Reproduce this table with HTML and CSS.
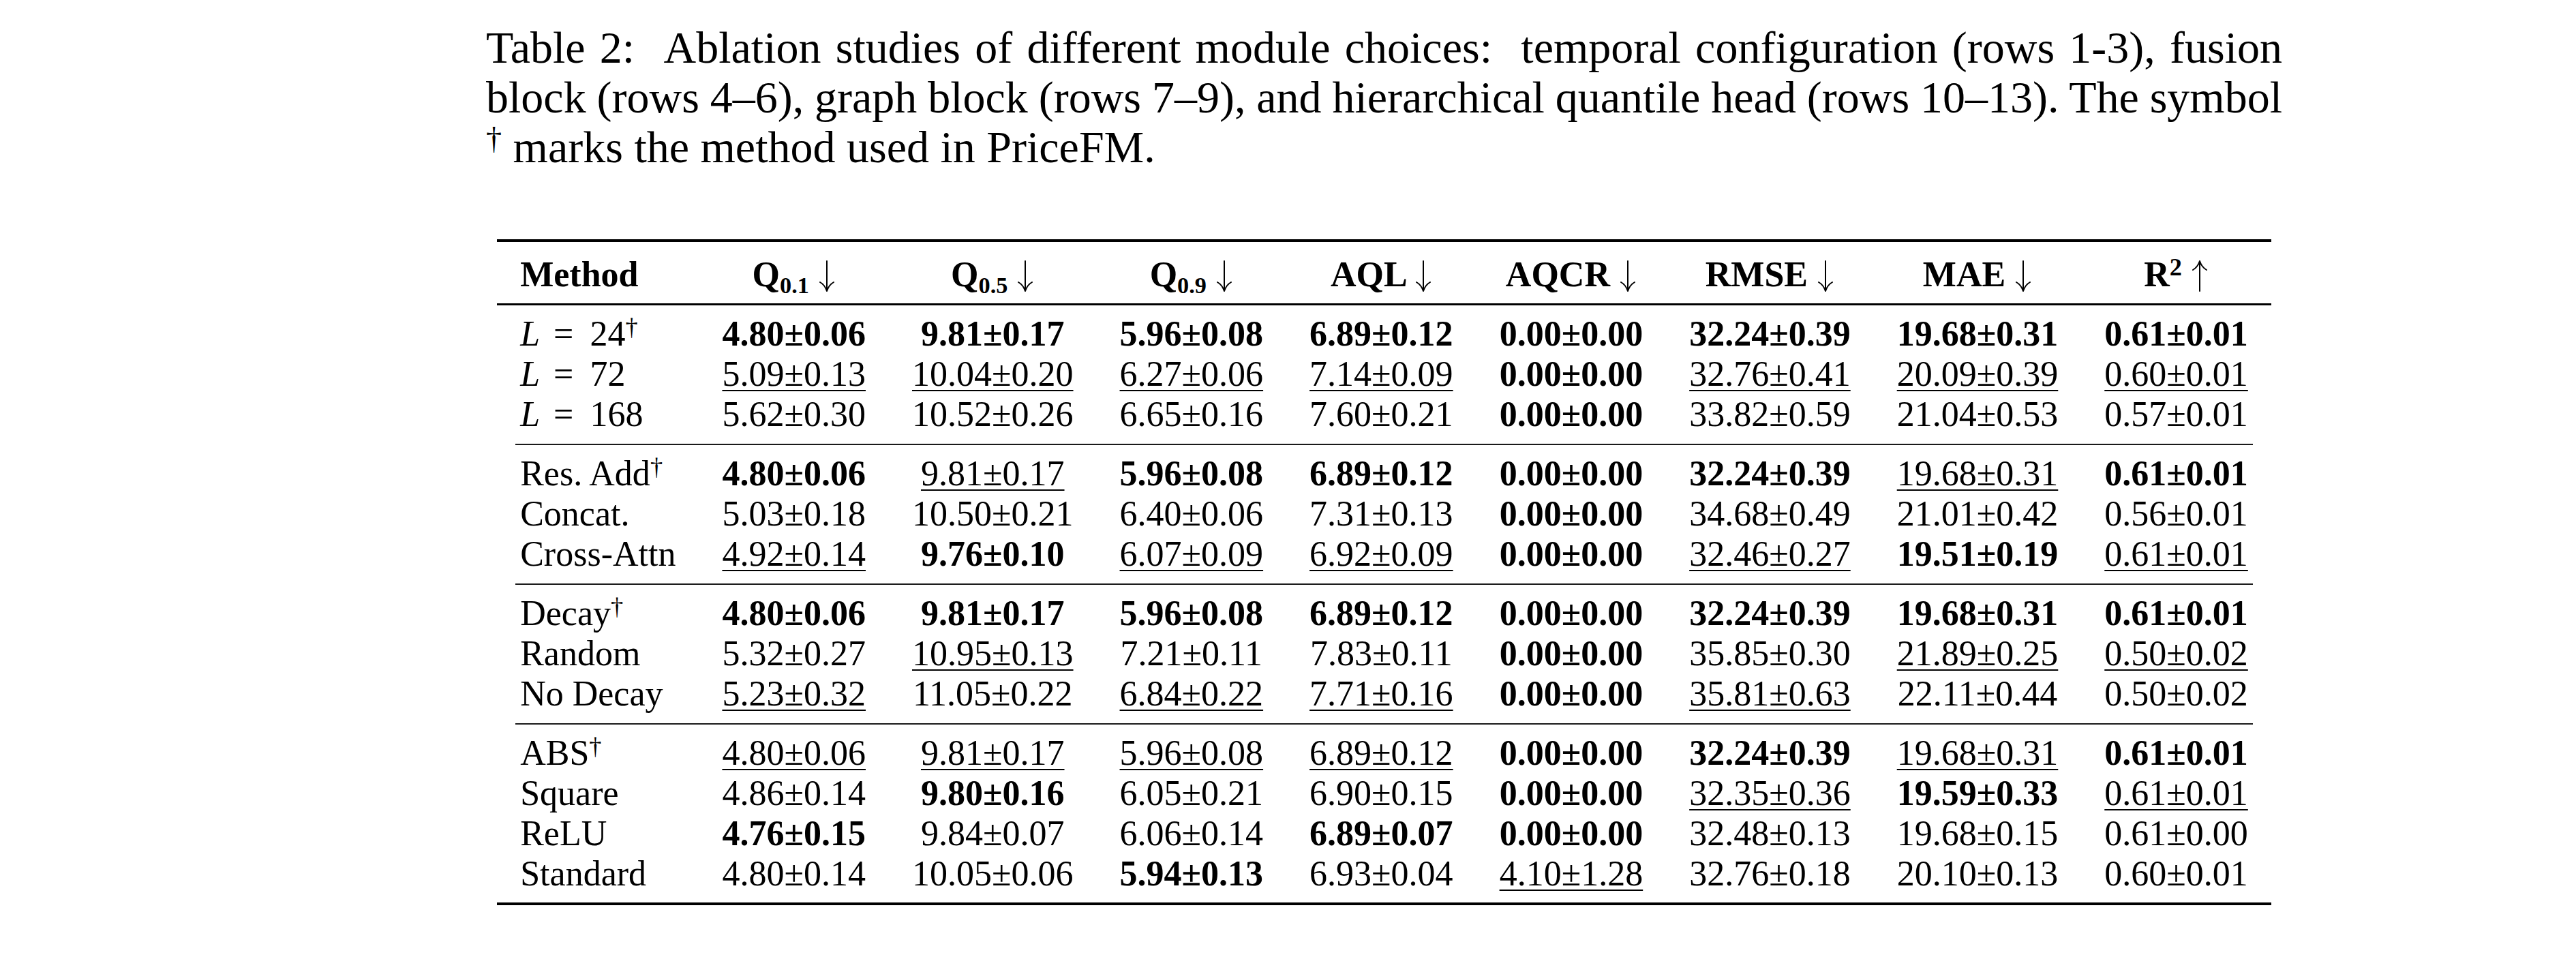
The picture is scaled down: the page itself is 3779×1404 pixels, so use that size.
FILE: index.html
```html
<!DOCTYPE html>
<html lang="en">
<head>
<meta charset="utf-8">
<title>Table 2: Ablation studies</title>
<link rel="stylesheet" href="styles.css">
</head>
<body>
<figure class="page">
  <figcaption class="caption">
    <span class="line">Table 2: &nbsp;Ablation studies of different module choices: &nbsp;temporal configuration (rows 1-3), fusion</span>
    <span class="line tight">block (rows 4–6), graph block (rows 7–9), and hierarchical quantile head (rows 10–13). The symbol</span>
    <span class="line last"><span class="dag">†</span> marks the method used in PriceFM.</span>
  </figcaption>
  <table class="results">
    <thead>
      <tr>
        <th class="method">Method</th>
        <th>Q<span class="sub">0.1</span> <svg class="arrow" viewBox="0 0 26 46" width="26" height="46" aria-label="↓"><path d="M13 1 V44 M3 32 Q10 36 13 45 Q16 36 23 32"/></svg></th>
        <th>Q<span class="sub">0.5</span> <svg class="arrow" viewBox="0 0 26 46" width="26" height="46" aria-label="↓"><path d="M13 1 V44 M3 32 Q10 36 13 45 Q16 36 23 32"/></svg></th>
        <th>Q<span class="sub">0.9</span> <svg class="arrow" viewBox="0 0 26 46" width="26" height="46" aria-label="↓"><path d="M13 1 V44 M3 32 Q10 36 13 45 Q16 36 23 32"/></svg></th>
        <th>AQL <svg class="arrow" viewBox="0 0 26 46" width="26" height="46" aria-label="↓"><path d="M13 1 V44 M3 32 Q10 36 13 45 Q16 36 23 32"/></svg></th>
        <th>AQCR <svg class="arrow" viewBox="0 0 26 46" width="26" height="46" aria-label="↓"><path d="M13 1 V44 M3 32 Q10 36 13 45 Q16 36 23 32"/></svg></th>
        <th>RMSE <svg class="arrow" viewBox="0 0 26 46" width="26" height="46" aria-label="↓"><path d="M13 1 V44 M3 32 Q10 36 13 45 Q16 36 23 32"/></svg></th>
        <th>MAE <svg class="arrow" viewBox="0 0 26 46" width="26" height="46" aria-label="↓"><path d="M13 1 V44 M3 32 Q10 36 13 45 Q16 36 23 32"/></svg></th>
        <th>R<span class="sup">2</span> <svg class="arrow" viewBox="0 0 26 46" width="26" height="46" aria-label="↑"><path d="M13 45 V2 M3 14 Q10 10 13 1 Q16 10 23 14"/></svg></th>
      </tr>
    </thead>
    <tbody class="grp">
      <tr>
        <td class="method"><i class="var">L</i><span class="eq">=</span>24<span class="dag">†</span></td>
        <td><strong>4.80±0.06</strong></td><td><strong>9.81±0.17</strong></td><td><strong>5.96±0.08</strong></td><td><strong>6.89±0.12</strong></td><td><strong>0.00±0.00</strong></td><td><strong>32.24±0.39</strong></td><td><strong>19.68±0.31</strong></td><td><strong>0.61±0.01</strong></td>
      </tr>
      <tr>
        <td class="method"><i class="var">L</i><span class="eq">=</span>72</td>
        <td><span class="second">5.09±0.13</span></td><td><span class="second">10.04±0.20</span></td><td><span class="second">6.27±0.06</span></td><td><span class="second">7.14±0.09</span></td><td><strong>0.00±0.00</strong></td><td><span class="second">32.76±0.41</span></td><td><span class="second">20.09±0.39</span></td><td><span class="second">0.60±0.01</span></td>
      </tr>
      <tr>
        <td class="method"><i class="var">L</i><span class="eq">=</span>168</td>
        <td>5.62±0.30</td><td>10.52±0.26</td><td>6.65±0.16</td><td>7.60±0.21</td><td><strong>0.00±0.00</strong></td><td>33.82±0.59</td><td>21.04±0.53</td><td>0.57±0.01</td>
      </tr>
    </tbody>
    <tbody class="grp">
      <tr>
        <td class="method">Res. Add<span class="dag">†</span></td>
        <td><strong>4.80±0.06</strong></td><td><span class="second">9.81±0.17</span></td><td><strong>5.96±0.08</strong></td><td><strong>6.89±0.12</strong></td><td><strong>0.00±0.00</strong></td><td><strong>32.24±0.39</strong></td><td><span class="second">19.68±0.31</span></td><td><strong>0.61±0.01</strong></td>
      </tr>
      <tr>
        <td class="method">Concat.</td>
        <td>5.03±0.18</td><td>10.50±0.21</td><td>6.40±0.06</td><td>7.31±0.13</td><td><strong>0.00±0.00</strong></td><td>34.68±0.49</td><td>21.01±0.42</td><td>0.56±0.01</td>
      </tr>
      <tr>
        <td class="method">Cross-Attn</td>
        <td><span class="second">4.92±0.14</span></td><td><strong>9.76±0.10</strong></td><td><span class="second">6.07±0.09</span></td><td><span class="second">6.92±0.09</span></td><td><strong>0.00±0.00</strong></td><td><span class="second">32.46±0.27</span></td><td><strong>19.51±0.19</strong></td><td><span class="second">0.61±0.01</span></td>
      </tr>
    </tbody>
    <tbody class="grp">
      <tr>
        <td class="method">Decay<span class="dag">†</span></td>
        <td><strong>4.80±0.06</strong></td><td><strong>9.81±0.17</strong></td><td><strong>5.96±0.08</strong></td><td><strong>6.89±0.12</strong></td><td><strong>0.00±0.00</strong></td><td><strong>32.24±0.39</strong></td><td><strong>19.68±0.31</strong></td><td><strong>0.61±0.01</strong></td>
      </tr>
      <tr>
        <td class="method">Random</td>
        <td>5.32±0.27</td><td><span class="second">10.95±0.13</span></td><td>7.21±0.11</td><td>7.83±0.11</td><td><strong>0.00±0.00</strong></td><td>35.85±0.30</td><td><span class="second">21.89±0.25</span></td><td><span class="second">0.50±0.02</span></td>
      </tr>
      <tr>
        <td class="method">No Decay</td>
        <td><span class="second">5.23±0.32</span></td><td>11.05±0.22</td><td><span class="second">6.84±0.22</span></td><td><span class="second">7.71±0.16</span></td><td><strong>0.00±0.00</strong></td><td><span class="second">35.81±0.63</span></td><td>22.11±0.44</td><td>0.50±0.02</td>
      </tr>
    </tbody>
    <tbody class="grp">
      <tr>
        <td class="method">ABS<span class="dag">†</span></td>
        <td><span class="second">4.80±0.06</span></td><td><span class="second">9.81±0.17</span></td><td><span class="second">5.96±0.08</span></td><td><span class="second">6.89±0.12</span></td><td><strong>0.00±0.00</strong></td><td><strong>32.24±0.39</strong></td><td><span class="second">19.68±0.31</span></td><td><strong>0.61±0.01</strong></td>
      </tr>
      <tr>
        <td class="method">Square</td>
        <td>4.86±0.14</td><td><strong>9.80±0.16</strong></td><td>6.05±0.21</td><td>6.90±0.15</td><td><strong>0.00±0.00</strong></td><td><span class="second">32.35±0.36</span></td><td><strong>19.59±0.33</strong></td><td><span class="second">0.61±0.01</span></td>
      </tr>
      <tr>
        <td class="method">ReLU</td>
        <td><strong>4.76±0.15</strong></td><td>9.84±0.07</td><td>6.06±0.14</td><td><strong>6.89±0.07</strong></td><td><strong>0.00±0.00</strong></td><td>32.48±0.13</td><td>19.68±0.15</td><td>0.61±0.00</td>
      </tr>
      <tr>
        <td class="method">Standard</td>
        <td>4.80±0.14</td><td>10.05±0.06</td><td><strong>5.94±0.13</strong></td><td>6.93±0.04</td><td><span class="second">4.10±1.28</span></td><td>32.76±0.18</td><td>20.10±0.13</td><td>0.60±0.01</td>
      </tr>
    </tbody>
  </table>
</figure>
</body>
</html>
```

FILE: styles.css
```css
html, body {
  margin: 0;
  padding: 0;
  background: #ffffff;
  color: #000000;
  font-family: "Liberation Serif", "Times New Roman", serif;
}

.page {
  margin: 0;
  padding: 33px 0 0 713px;
  width: 2635px;
}

.caption {
  font-size: 66px;
  line-height: 73px;
}

.caption .line {
  display: block;
  text-align: justify;
  text-align-last: justify;
}

.caption .line.tight {
  word-spacing: -4px;
}

.caption .line.last {
  text-align-last: left;
}

.dag {
  font-size: 0.7em;
  line-height: 0;
  vertical-align: 0.42em;
}

.results {
  margin: 99px auto 0;
  border-collapse: separate;
  border-spacing: 0;
  font-size: 52px;
  line-height: 59px;
}

.results th,
.results td {
  padding: 0 34px;
  text-align: center;
  white-space: nowrap;
  vertical-align: baseline;
}

.results th {
  font-weight: bold;
  padding-top: 18px;
  padding-bottom: 13px;
  border-top: 4px solid #000;
  border-bottom: 3px solid #000;
}

.results .method {
  text-align: left;
}

.results td.method {
  font-weight: normal;
}

.sub {
  font-size: 0.66em;
  line-height: 0;
  vertical-align: -10px;
}

.sup {
  font-size: 0.7em;
  line-height: 0;
  vertical-align: 0.45em;
}

.arrow {
  display: inline-block;
  width: 26px;
  height: 46px;
  vertical-align: -8px;
  fill: none;
  stroke: #000;
  stroke-width: 2;
  stroke-linecap: round;
  stroke-linejoin: round;
}

.var {
  font-style: italic;
}

.eq {
  margin: 0 24px 0 20px;
}

.results strong {
  font-weight: bold;
}

.second {
  text-decoration: underline;
  text-decoration-thickness: 2px;
  text-underline-offset: 6px;
  text-decoration-skip-ink: none;
}

.grp tr:first-child td {
  padding-top: 12px;
}

.grp tr:last-child td {
  padding-bottom: 14px;
}

.grp + .grp tr:first-child td {
  padding-top: 14px;
  background-image: linear-gradient(#1a1a1a, #1a1a1a);
  background-repeat: no-repeat;
  background-position: 0 0;
  background-size: 100% 2px;
}

.grp + .grp tr:first-child td:first-child {
  background-position: 27px 0;
  background-size: calc(100% - 27px) 2px;
}

.grp + .grp tr:first-child td:last-child {
  background-size: calc(100% - 27px) 2px;
}

.grp:last-child tr:last-child td {
  padding-bottom: 13px;
  border-bottom: 4px solid #000;
}
```
